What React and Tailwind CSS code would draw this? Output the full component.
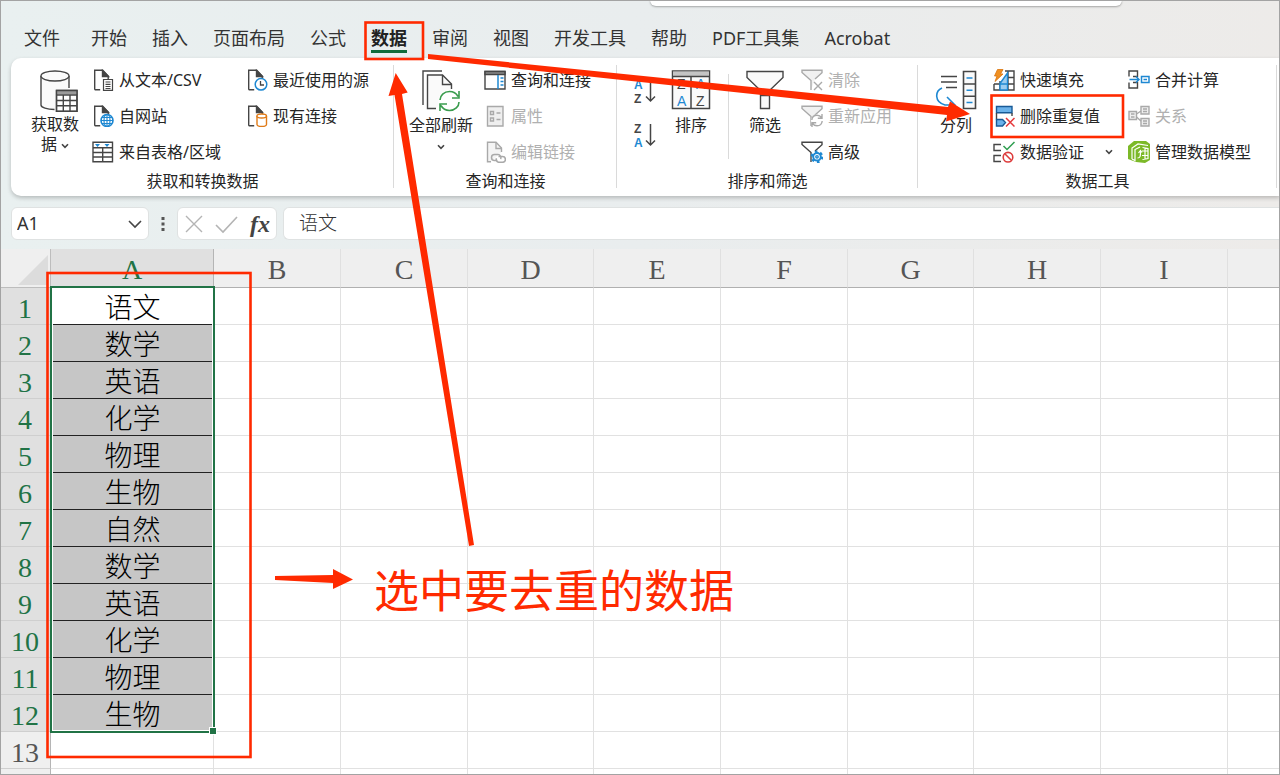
import { useState } from 'react';

const UI_FONT = "font-['Noto_Sans','Noto_Sans_CJK_SC',sans-serif]";
const SHEET_FONT = "font-['Liberation_Serif','Noto_Sans_CJK_SC',serif]";

const INK = '#454545';
const MUTED = '#a9a9a9';
const BLUE = '#1e88d2';

const TABS = ['文件', '开始', '插入', '页面布局', '公式', '数据', '审阅', '视图', '开发工具', '帮助', 'PDF工具集', 'Acrobat'];
const COLUMNS = [
  { name: 'A', width: 'w-[163px]' },
  { name: 'B', width: 'w-[127px]' },
  { name: 'C', width: 'w-[127px]' },
  { name: 'D', width: 'w-[126px]' },
  { name: 'E', width: 'w-[127px]' },
  { name: 'F', width: 'w-[127px]' },
  { name: 'G', width: 'w-[126px]' },
  { name: 'H', width: 'w-[127px]' },
  { name: 'I', width: 'w-[127px]' },
  { name: '', width: 'w-auto' },
];
const SUBJECTS = ['语文', '数学', '英语', '化学', '物理', '生物', '自然', '数学', '英语', '化学', '物理', '生物'];
const ROWS = [...SUBJECTS, '', ''];

/* ---------- icons ---------- */

const Icon = ({ w = 22, h = 22, color = INK, className = '', children }) => (
  <svg
    width={w}
    height={h}
    viewBox={`0 0 ${w} ${h}`}
    fill="none"
    stroke={color}
    strokeWidth="1.4"
    className={`shrink-0 ${className}`}
    aria-hidden="true"
  >
    {children}
  </svg>
);

const Chevron = ({ className = '' }) => (
  <Icon w={8} h={6} className={className}>
    <path d="M1 1.2 4 4.4 7 1.2" strokeWidth="1.6" />
  </Icon>
);

const DatabaseIcon = () => (
  <Icon w={38} h={42} className="ml-2">
    <path d="M1 6v29c0 2.500 6 4.500 15 4.500V20h13V6z" fill="#fafafa" stroke="none" />
    <path d="M1 6v29c0 2.500 6 4.500 13.500 4.500M29 6v12" />
    <ellipse cx="15" cy="6" rx="14" ry="5" fill="#fafafa" />
    <path d="M16.500 20.500h20.500v21H16.500z" fill="#fff" />
    <path d="M17 21h20v3.500H17z" fill="#9a9a9a" stroke="none" />
    <path d="M16.500 20.500h20.500v20.700H16.500zM16.500 25h20.500M16.500 30.500h20.500M16.500 35.800h20.500M23.300 25v16M30 25v16" />
  </Icon>
);

const PageShape = () => (
  <>
    <path d="M2.700 20.700V1.200h8l5.500 5.800v4M2.700 20.700h5.500" />
    <path d="M10.500 1.500v6h6z" fill={INK} />
  </>
);

const TextFileIcon = () => (
  <Icon>
    <PageShape />
    <path d="M11.500 10.500h9v10.800h-9zM13.500 13h5M13.500 15.300h5M13.500 17.500h5M13.500 19.500h5" strokeWidth="1.200" />
  </Icon>
);

const WebFileIcon = () => (
  <Icon>
    <PageShape />
    <circle cx="15" cy="15.500" r="6" fill="#fff" stroke={BLUE} strokeWidth="1.600" />
    <path d="M9 15.500h12M10 12.500h10M10 18.500h10M15 9.500v12" stroke={BLUE} strokeWidth="1.100" />
    <ellipse cx="15" cy="15.500" rx="3" ry="6" stroke={BLUE} strokeWidth="1.200" />
  </Icon>
);

const TableRangeIcon = () => (
  <Icon>
    <path d="M1 1.200h19.500v19.500H1zM1 6.800h19.500M1 11.500h19.500M1 16h19.500M10.700 6.800v14" />
    <path d="M3 3h5l-2.500 3zM12.500 3h5L15 6z" fill={BLUE} stroke="none" />
  </Icon>
);

const RecentIcon = () => (
  <Icon>
    <PageShape />
    <circle cx="15" cy="15.300" r="5.800" fill="#fff" stroke={BLUE} strokeWidth="1.500" />
    <path d="M14.500 12v4h3.500" strokeWidth="1.300" />
  </Icon>
);

const ConnectionIcon = () => (
  <Icon>
    <PageShape />
    <path d="M11 11v8.500c0 1 2 2 4.700 2s4.800-1 4.800-2V11" fill="#fff" stroke="#e07b18" />
    <ellipse cx="15.700" cy="11" rx="4.800" ry="2" fill="#fff" stroke="#e07b18" />
  </Icon>
);

const RefreshAllIcon = () => (
  <Icon w={38} h={42}>
    <path d="M1 35V1h19" />
    <path d="M14 38.500H5.500V5h15L29.500 14v5" fill="#fafafa" />
    <path d="M20.500 5v9.500h9" />
    <circle cx="27.500" cy="31" r="11" fill="#fff" stroke="none" />
    <path d="M18 30c0-4.500 4-8.500 9.500-8.500 4 0 7 2.200 8.500 5M37 32c0 4.500-4 8.500-9.500 8.500-4 0-7-2.200-8.500-5M37 21v7h-7M18 41v-7h7" stroke="#3a9c4e" strokeWidth="1.600" />
  </Icon>
);

const QueryPaneIcon = () => (
  <Icon>
    <path d="M1 2.500h20v17.500H1z" />
    <path d="M1 2.500h20v3H1z" fill="#8a8a8a" />
    <path d="M14 6v14M16.500 9h3M16.500 12.500h3M16.500 16h3" stroke={BLUE} strokeWidth="1.500" />
  </Icon>
);

const PropertiesIcon = () => (
  <Icon color={MUTED}>
    <path d="M3.500 1.500h15.500v19.500H3.500z" fill="#efefef" />
    <path d="M6.500 6.500h3v3h-3zM6.500 13h3v3h-3zM12.500 8h4M12.500 14.500h4" />
  </Icon>
);

const EditLinksIcon = () => (
  <Icon color={MUTED}>
    <path d="M7 20.700H3.500V1.200h8.500l5.500 5.800v4" fill="#f4f4f4" />
    <path d="M12 1.500v6h6" />
    <path d="M13.500 19.500h-3a3 3 0 0 1 0-6h3.500a3 3 0 0 1 2.500 4.500M14.500 15.500h4a2.800 2.800 0 0 1 0 5.800H15a2.800 2.800 0 0 1-2.500-4" strokeWidth="1.500" />
  </Icon>
);

const SortIcon = ({ first, second, firstColor, secondColor }) => (
  <svg width="24" height="28" viewBox="0 0 24 28" fill="none" aria-hidden="true">
    <g fontFamily="Liberation Sans, sans-serif" fontSize="12" fontWeight="bold">
      <text x="1" y="11" fill={firstColor}>{first}</text>
      <text x="1" y="25" fill={secondColor}>{second}</text>
    </g>
    <path d="M17.500 2v21M13 18.500l4.500 4.500 4.500-4.500" stroke={INK} strokeWidth="1.500" />
  </svg>
);

const SortTableIcon = () => (
  <svg width="40" height="40" viewBox="0 0 40 40" fill="none" aria-hidden="true">
    <path d="M1.500 1h37v37.500h-37z" fill="#fafafa" stroke={INK} strokeWidth="1.500" />
    <path d="M2 1.500h36V6H2z" fill="#c4c4c4" />
    <path d="M1 6.500h38M20 6.500V38" stroke={INK} strokeWidth="1.500" />
    <g fontFamily="Liberation Sans, sans-serif" fontSize="14">
      <text x="6" y="19" fill={INK}>Z</text>
      <text x="6" y="36" fill={BLUE}>A</text>
      <text x="25" y="19" fill={BLUE}>A</text>
      <text x="25" y="36" fill={INK}>Z</text>
    </g>
  </svg>
);

const FilterIcon = () => (
  <Icon w={40} h={40}>
    <path d="M2 1.500h36v6L24.500 20.500v18h-9v-18L2 7.500z" fill="#fafafa" />
    <path d="M15.500 25.500h9" />
  </Icon>
);

const SmallFunnel = ({ color }) => (
  <path d="M10 21v-9.500L1 3.500V1.200h20v2.500L14 10" stroke={color} fill={color === MUTED ? '#f1f1f1' : 'none'} />
);

const ClearFilterIcon = () => (
  <Icon color={MUTED}>
    <SmallFunnel color={MUTED} />
    <path d="m13 13 8 8M21 13l-8 8" />
  </Icon>
);

const ReapplyIcon = () => (
  <Icon color={MUTED}>
    <SmallFunnel color={MUTED} />
    <circle cx="16" cy="15.500" r="6" fill="#fff" stroke="none" />
    <path d="M10.800 15c.3-3 2.500-4.800 5.200-4.800 2 0 3.600 1 4.500 2.500M21.200 16c-.3 3-2.500 4.800-5.200 4.800-2 0-3.600-1-4.500-2.500M21 9v4.200h-4.200M11 22v-4.200h4.200" />
  </Icon>
);

const AdvancedFilterIcon = () => (
  <Icon>
    <SmallFunnel color={INK} />
    <circle cx="16" cy="15.800" r="3.800" fill="#fff" stroke={BLUE} strokeWidth="2" />
    <circle cx="16" cy="15.800" r="5.200" stroke={BLUE} strokeWidth="2.200" strokeDasharray="2.600 2.840" />
    <circle cx="16" cy="15.800" r="1.200" stroke={BLUE} />
  </Icon>
);

const TextToColumnsIcon = () => (
  <Icon w={42} h={40}>
    <path d="M6 6.500h16M6 12h16M11 17.500h11" />
    <path d="M7 18c-7 3-8 14 3 17h9M12 27l8 8-8 5" stroke={BLUE} strokeWidth="1.600" />
    <path d="M28.500 1.500h12v37h-12zM28.500 14h12M28.500 26.300h12" fill="#fafafa" strokeWidth="1.600" />
    <path d="M31.500 8h6M31.500 20.200h6M31.500 32.500h6" stroke={BLUE} strokeWidth="1.600" />
  </Icon>
);

const FlashFillIcon = () => (
  <Icon>
    <path d="M12 2h9v19H1v-6M1 15h20M7 12v9M15 2v19M15 8.500h6" />
    <path d="M7 14.500 14.500 4v17H7z" fill="#9dcdf0" stroke={BLUE} />
    <path d="M7 15h7.500" stroke={BLUE} />
    <path d="M4.500.500h5.500L7.500 5H10L2 12.500 4 7H1.500z" fill="#f09022" stroke="#d9730d" strokeWidth=".8" />
  </Icon>
);

const RemoveDuplicatesIcon = () => (
  <Icon>
    <path d="M3.500 1.500h15.500v6.200H3.500z" fill="#6bb2ea" stroke="#185a96" />
    <path d="M3.500 8v6.500M19 8v3" />
    <path d="M3.500 14.500h6l3 3-3 3.500h-6z" fill="#6bb2ea" stroke="#185a96" />
    <path d="m13 13 8.500 8.500M21.500 13 13 21.500" stroke="#e5383b" strokeWidth="1.500" />
  </Icon>
);

const ValidationIcon = () => (
  <Icon>
    <path d="M8 3.500H1v6h7M8 14.500H1v6h7" />
    <path d="m10.500 5 3.500 3.500L21.500 1" stroke="#2e9e4f" strokeWidth="1.500" />
    <circle cx="15" cy="16.200" r="4.800" stroke="#dd3c3c" strokeWidth="1.600" />
    <path d="m11.800 12.800 6.500 6.500" stroke="#dd3c3c" strokeWidth="1.600" />
  </Icon>
);

const ConsolidateIcon = () => (
  <Icon>
    <path d="M1 7.500V2h8.500v5.500H5M1 13.500V19h8.500v-5.500H5" />
    <path d="M1.500 10.500H11M8 7.500l3 3-3 3" stroke={BLUE} strokeWidth="1.500" />
    <path d="M13.500 7.500H21v6h-7.500zM15.500 10.500h3.500" stroke={BLUE} strokeWidth="1.500" />
  </Icon>
);

const RelationsIcon = () => (
  <Icon color={MUTED}>
    <path d="M1 6.500h7.500v8H1zM13 1.500h8v7.500h-8zM13 13.500h8v7.500h-8z" fill="#efefef" />
    <path d="M3 9h3.500M3 12h3.500M15 4h4M15 6.500h4M15 16h4M15 18.500h4M8.500 9l4.500-3M8.500 12l4.500 4" />
  </Icon>
);

const DataModelIcon = () => (
  <Icon>
    <path d="M0 5 6 0h12l4 3v16l-5 3-9-1-8-3z" fill="#7cb928" stroke="none" />
    <path d="M4 18V7l6-4 10 1.500M4 18l3 1.500V8.500L12 6" stroke="#fff" strokeWidth="1.200" />
    <path d="M14.500 6.500 20 7.500v10l-5.500 1M14 10h6M14 14.500h6M17 7v11M9.500 17c3 0 3-2 3-7M10.500 12l2-2.500 1.500 2" stroke="#fff" strokeWidth="1.200" />
  </Icon>
);

/* ---------- ribbon parts ---------- */

const SmallButton = ({ icon: ButtonIcon, label, disabled, menu }) => (
  <button
    type="button"
    disabled={disabled}
    className="flex h-9 items-center gap-[5px] whitespace-nowrap text-[16px] leading-5 text-[#262626] disabled:text-[#b0b0b0]"
  >
    <ButtonIcon />
    <span>{label}</span>
    {menu && <Chevron className="ml-4" />}
  </button>
);

const LargeButton = ({ icon, className, children }) => (
  <button
    type="button"
    className={`flex shrink-0 flex-col items-center gap-1 pt-2 text-center text-[16px] leading-[22px] text-[#262626] ${className}`}
  >
    <span className="flex h-10 items-start">{icon}</span>
    {children}
  </button>
);

const RibbonGroup = ({ title, className, children }) => (
  <section className={`relative flex shrink-0 flex-col ${className}`}>
    <div className="flex h-[108px]">{children}</div>
    <h2 className="text-center text-[16px] leading-[22px] text-[#262626]">{title}</h2>
    <span className="absolute top-[3px] right-0 h-[123px] w-px bg-[#dadada]" />
  </section>
);

const Ribbon = () => (
  <div className="ml-[11px] flex h-[138px] overflow-hidden rounded-l-[10px] bg-white pt-1 shadow-[0_2px_4px_rgba(0,0,0,0.22)]">
    <RibbonGroup title="获取和转换数据" className="w-[383px]">
      <LargeButton icon={<DatabaseIcon />} className="ml-3 w-16">
        <span className="leading-5">
          获取数
          <br />
          据 <Chevron className="inline" />
        </span>
      </LargeButton>
      <div className="ml-[5px] w-[154px]">
        <SmallButton icon={TextFileIcon} label="从文本/CSV" />
        <SmallButton icon={WebFileIcon} label="自网站" />
        <SmallButton icon={TableRangeIcon} label="来自表格/区域" />
      </div>
      <div>
        <SmallButton icon={RecentIcon} label="最近使用的源" />
        <SmallButton icon={ConnectionIcon} label="现有连接" />
      </div>
    </RibbonGroup>

    <RibbonGroup title="查询和连接" className="w-[223px]">
      <LargeButton icon={<RefreshAllIcon />} className="ml-[11px] w-[72px]">
        <span>全部刷新</span>
        <Chevron className="mt-1" />
      </LargeButton>
      <div className="ml-[7px]">
        <SmallButton icon={QueryPaneIcon} label="查询和连接" />
        <SmallButton icon={PropertiesIcon} label="属性" disabled />
        <SmallButton icon={EditLinksIcon} label="编辑链接" disabled />
      </div>
    </RibbonGroup>

    <RibbonGroup title="排序和筛选" className="w-[301px]">
      <div className="ml-4 flex w-6 flex-col gap-4 pt-4">
        <button type="button" aria-label="升序">
          <SortIcon first="A" second="Z" firstColor={BLUE} secondColor={INK} />
        </button>
        <button type="button" aria-label="降序">
          <SortIcon first="Z" second="A" firstColor={INK} secondColor={BLUE} />
        </button>
      </div>
      <LargeButton icon={<SortTableIcon />} className="ml-[7px] w-[54px]">
        <span>排序</span>
      </LargeButton>
      <span className="mt-3 ml-[10px] h-[85px] w-px bg-[#dadada]" />
      <LargeButton icon={<FilterIcon />} className="ml-2 w-14">
        <span>筛选</span>
      </LargeButton>
      <div className="ml-2">
        <SmallButton icon={ClearFilterIcon} label="清除" disabled />
        <SmallButton icon={ReapplyIcon} label="重新应用" disabled />
        <SmallButton icon={AdvancedFilterIcon} label="高级" />
      </div>
    </RibbonGroup>

    <RibbonGroup title="数据工具" className="w-[359px]">
      <LargeButton icon={<TextToColumnsIcon />} className="ml-[11px] w-[54px]">
        <span>分列</span>
      </LargeButton>
      <div className="ml-[10px] w-[135px]">
        <SmallButton icon={FlashFillIcon} label="快速填充" />
        <SmallButton icon={RemoveDuplicatesIcon} label="删除重复值" />
        <SmallButton icon={ValidationIcon} label="数据验证" menu />
      </div>
      <div>
        <SmallButton icon={ConsolidateIcon} label="合并计算" />
        <SmallButton icon={RelationsIcon} label="关系" disabled />
        <SmallButton icon={DataModelIcon} label="管理数据模型" />
      </div>
    </RibbonGroup>
  </div>
);

const FormulaBar = () => (
  <div className="flex h-[53px] items-center pt-[2px] pl-[11px]">
    <div className="flex h-[33px] w-[138px] items-center rounded-md border border-[#dfe2e2] bg-white pr-[5px] pl-[5px]">
      <input aria-label="名称框" defaultValue="A1" className="w-full min-w-0 text-[18px] text-[#333] outline-none" />
      <button type="button" aria-label="名称列表">
        <Icon w={16} h={10}>
          <path d="m2 2 6 6 6-6" strokeWidth="1.600" />
        </Icon>
      </button>
    </div>
    <Icon w={28} h={20}>
      <path d="M12.500 3h3v3h-3zM12.500 8.500h3v3h-3zM12.500 14h3v3h-3z" fill="#555" stroke="none" />
    </Icon>
    <div className="flex h-[33px] w-[100px] items-center justify-between rounded-md border border-[#dfe2e2] bg-white px-[6px]">
      <button type="button" aria-label="取消">
        <Icon w={20} h={20} color="#b4b4b4">
          <path d="m2 2 16 16M18 2 2 18" />
        </Icon>
      </button>
      <button type="button" aria-label="输入">
        <Icon w={24} h={20} color="#b4b4b4">
          <path d="m1 11 7 7L22 3" strokeWidth="1.600" />
        </Icon>
      </button>
      <button type="button" aria-label="插入函数" className="font-['Liberation_Serif',serif] text-[24px] leading-6 font-bold text-[#444] italic">
        fx
      </button>
    </div>
    <input
      aria-label="编辑栏"
      defaultValue="语文"
      className={`ml-[6px] h-[33px] min-w-0 flex-1 rounded-l-md border border-r-0 border-[#dfe2e2] bg-white px-[15px] pb-1 text-[19px] font-light text-[#333] outline-none ${SHEET_FONT}`}
    />
  </div>
);

/* ---------- sheet ---------- */

const Sheet = () => (
  <div className="relative">
    <table className={`w-full table-fixed border-separate border-spacing-0 text-[28px] ${SHEET_FONT}`}>
      <colgroup>
        <col className="w-[51px]" />
        {COLUMNS.map((col) => (
          <col key={col.name} className={col.width} />
        ))}
      </colgroup>
      <thead>
        <tr className="h-[39px] leading-[34px]">
          <td className="border-r border-b border-[#bdbdbd] bg-[#efefef] p-0">
            <svg width="30" height="30" viewBox="0 0 30 30" className="mt-1 ml-[18px]" aria-hidden="true">
              <path d="M30 0v30H0z" fill="#dcdcdc" />
            </svg>
          </td>
          {COLUMNS.map((col, index) => (
            <th
              key={col.name}
              scope="col"
              className={`border-r border-b border-b-[#b0b0b0] p-0 pt-1 font-normal ${
                index === 0 ? 'border-r-[#b5b5b5] bg-[#e0e0e0] text-[#217346]' : 'border-r-[#e0e0e0] bg-[#efefef] text-[#555]'
              }`}
            >
              {col.name}
            </th>
          ))}
        </tr>
      </thead>
      <tbody>
        {ROWS.map((subject, row) => (
          <tr key={row} className="h-[37px] leading-[30px]">
            <th
              scope="row"
              className={`border-r border-b border-r-[#b5b5b5] border-b-[#cfcfcf] p-0 pt-[6px] font-normal ${
                subject ? 'bg-[#e0e0e0] text-[#217346]' : 'bg-[#efefef] text-[#555]'
              }`}
            >
              {row < 13 ? row + 1 : ''}
            </th>
            {COLUMNS.map((col, index) =>
              index === 0 && subject ? (
                <td
                  key={col.name}
                  className={`border-b border-[#222] p-0 pt-[6px] text-center font-light text-black ${row === 0 ? 'bg-white' : 'bg-[#c6c6c6]'}`}
                >
                  {subject}
                </td>
              ) : (
                <td key={col.name} className="border-r border-b border-[#e1e1e1] bg-white p-0" />
              )
            )}
          </tr>
        ))}
      </tbody>
    </table>
    {/* selection frame with fill handle */}
    <div className="pointer-events-none absolute top-[37px] left-[50px] h-[447px] w-[165px] border-2 border-[#217346]">
      <div className="h-full border border-white" />
      <span className="absolute -right-[3px] -bottom-[3px] size-[6px] bg-[#217346] outline outline-white" />
    </div>
  </div>
);

const Annotations = () => (
  <div className="pointer-events-none absolute inset-0 overflow-hidden">
    <svg width="1280" height="775" viewBox="0 0 1280 775" fill="none" aria-hidden="true">
      <g stroke="#ff2a00" strokeWidth="2.600">
        <rect x="365.500" y="22.500" width="57.500" height="36.500" />
        <rect x="991.500" y="95.500" width="131.500" height="41.500" />
        <rect x="47.500" y="273" width="203" height="484" />
      </g>
      <g fill="#ff2a00">
        <path d="M428 54 948 107l2-5.500L970 114l-24 7.500 1-6.500L428 59z" />
        <path d="m395.700 73 12 19.500-5.700 1.500L474 545l-5 1-74.500-451-6 1z" />
        <path d="M275 576l58-1v-6l20 10.500-20 9.500v-6l-58-3z" />
      </g>
    </svg>
    <p className="absolute top-[561px] left-[374px] text-[45px] leading-[60px] whitespace-nowrap text-[#ff2a00]">
      选中要去重的数据
    </p>
  </div>
);

const App = () => {
  const [activeTab, setActiveTab] = useState('数据');

  return (
    <div className={`relative h-screen overflow-hidden bg-linear-to-r from-[#e9f0f0] via-[#e9edee] to-[#edebe9] ${UI_FONT}`}>
      <div className="absolute top-0 left-[650px] h-[6px] w-[472px] rounded-b-md bg-white shadow-[0_1px_2px_rgba(0,0,0,0.3)]" />

      <nav className="flex h-[58px] items-start gap-[25px] pt-[26px] pl-[24px]">
        {TABS.map((tab) => (
          <button
            key={tab}
            type="button"
            onClick={() => setActiveTab(tab)}
            className={`border-b-[3px] text-[18px] leading-6 whitespace-nowrap first:mr-[6px] ${
              tab === activeTab ? 'border-[#106b3a] font-bold text-[#222]' : 'border-transparent text-[#333]'
            }`}
          >
            {tab}
          </button>
        ))}
      </nav>

      <Ribbon />
      <FormulaBar />
      <Sheet />
      <Annotations />
      <div className="pointer-events-none absolute inset-0 border border-[#a3a3a3]" />
    </div>
  );
};

export default App;
